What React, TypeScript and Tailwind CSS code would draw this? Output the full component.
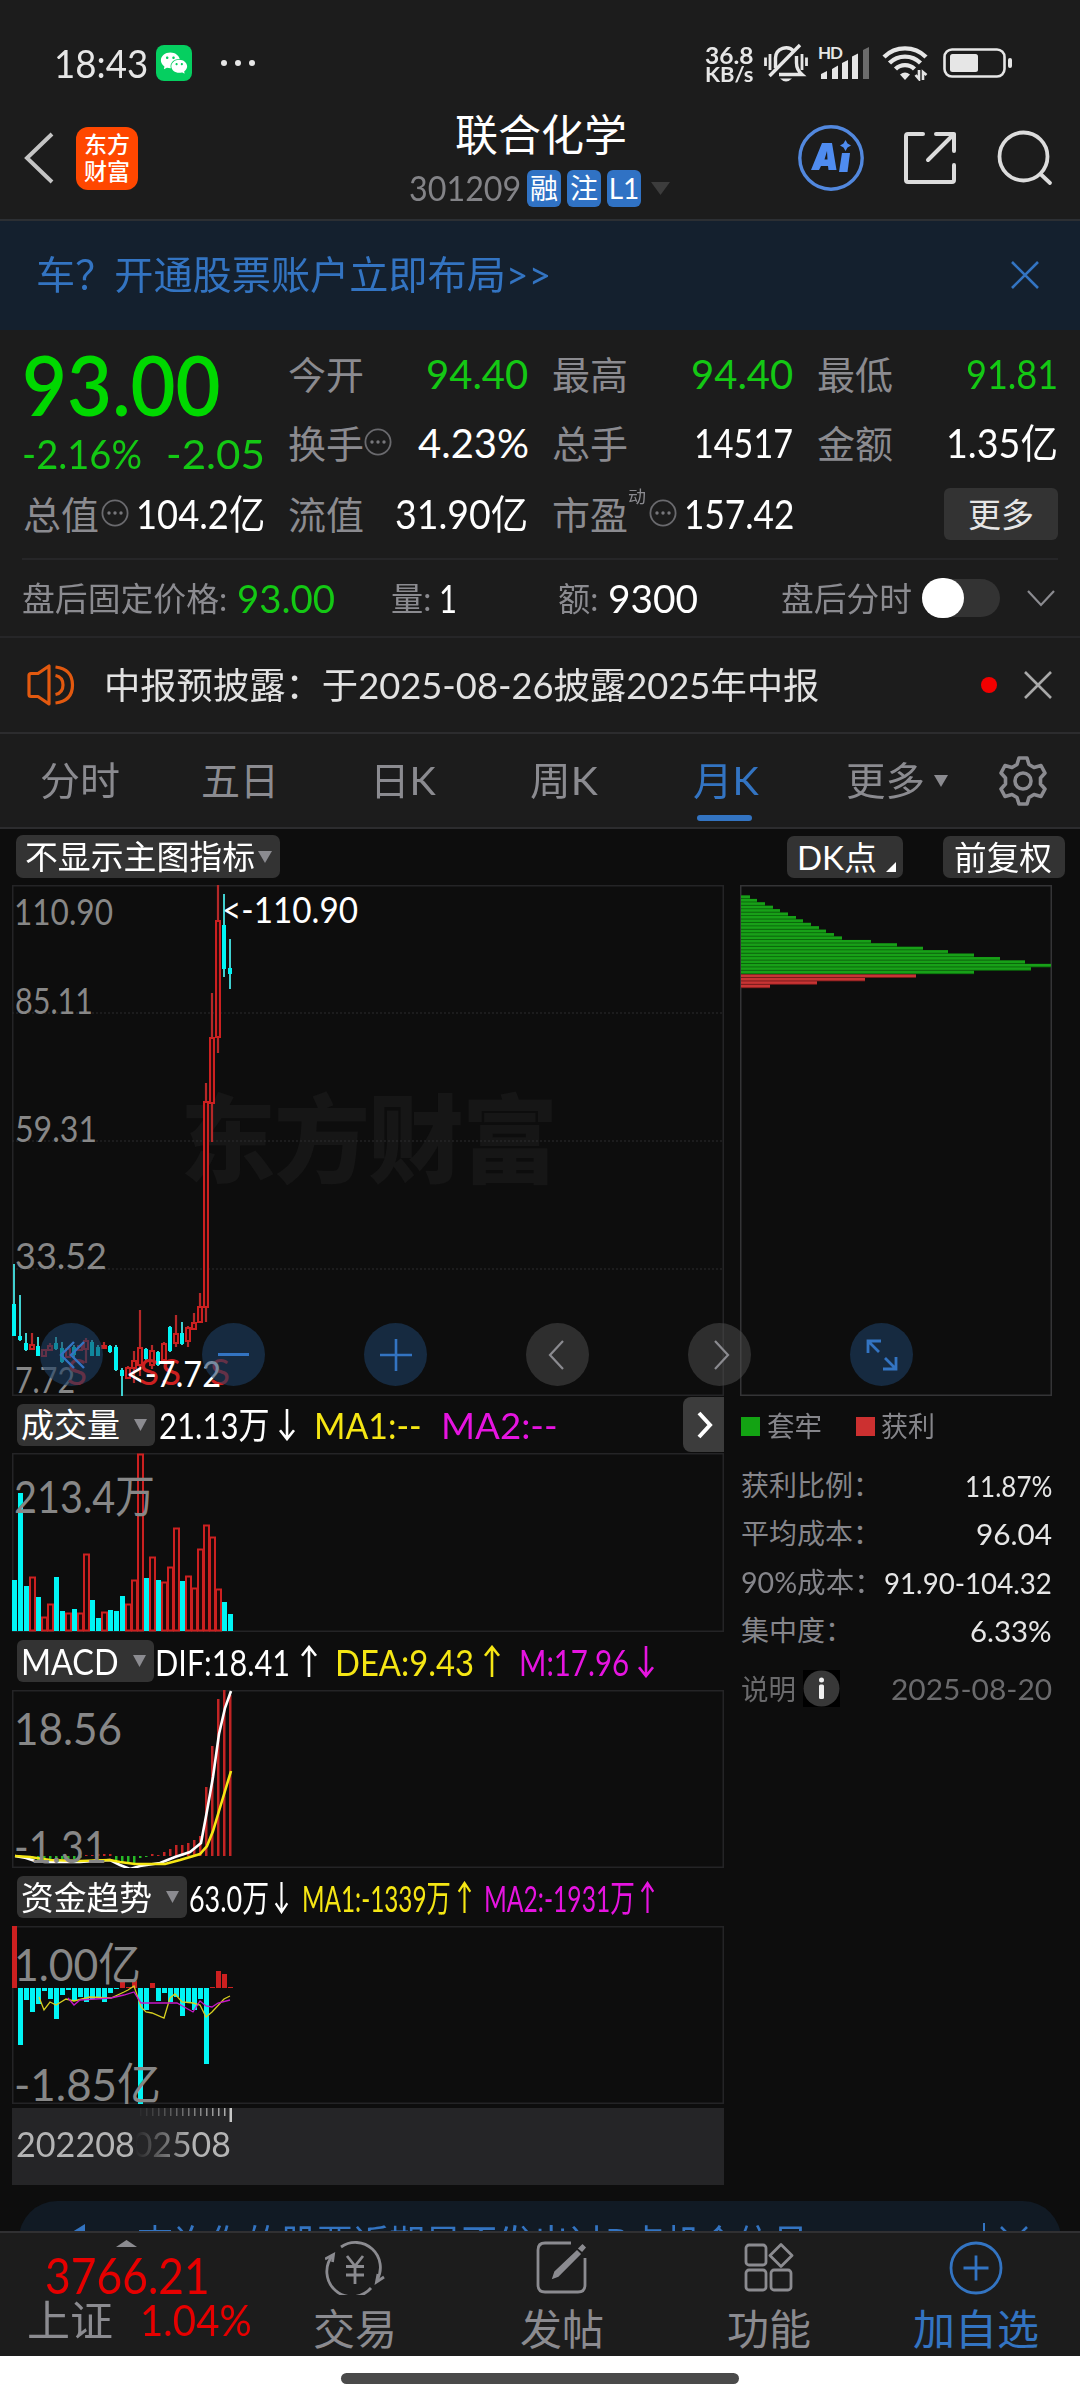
import React, { useLayoutEffect, useRef, useState } from "react";
import clsx from "clsx";
import { AiFillWechat } from "react-icons/ai";

/**
 * Props for Fit component
 */
interface FitProps {
  /** Text size, colour and the width of the box */
  className?: string;
  children: React.ReactNode;
}

/**
 * Fit - single line label squeezed or stretched to the width of its box
 */
const Fit: React.FC<FitProps> = ({ className, children }) => {
  const box = useRef<HTMLSpanElement>(null);
  const text = useRef<HTMLSpanElement>(null);
  const [scale, setScale] = useState(1);

  useLayoutEffect(() => {
    if (box.current && text.current) {
      setScale(box.current.clientWidth / text.current.offsetWidth);
    }
  }, [children]);

  return (
    <span ref={box} className={clsx("block shrink-0 leading-none", className)}>
      <span
        ref={text}
        className="inline-block origin-left whitespace-nowrap"
        style={{ transform: `scaleX(${scale})` }}
      >
        {children}
      </span>
    </span>
  );
};

/* ------------------------------ data ------------------------------ */

type Dir = "u" | "d";

// direction, high, body top, body bottom, low (in chart pixels)
const CANDLES: [Dir, number, number, number, number][] = [
  ["d", 379, 419, 451, 451],
  ["d", 410, 451, 455, 456],
  ["d", 448, 458, 465, 466],
  ["u", 448, 460, 464, 464],
  ["d", 452, 461, 471, 471],
  ["u", 464, 465, 471, 471],
  ["u", 458, 461, 465, 466],
  ["d", 452, 458, 464, 465],
  ["d", 457, 463, 477, 478],
  ["u", 462, 464, 472, 473],
  ["d", 460, 462, 470, 472],
  ["u", 460, 461, 465, 466],
  ["u", 453, 456, 464, 478],
  ["d", 455, 457, 471, 471],
  ["d", 460, 462, 471, 471],
  ["u", 457, 461, 463, 464],
  ["d", 460, 461, 467, 468],
  ["d", 460, 462, 485, 486],
  ["d", 483, 485, 491, 511],
  ["u", 481, 483, 493, 493],
  ["u", 466, 476, 483, 498],
  ["u", 425, 463, 480, 491],
  ["d", 463, 464, 474, 475],
  ["u", 460, 466, 480, 484],
  ["d", 466, 467, 480, 481],
  ["u", 457, 459, 475, 475],
  ["d", 441, 442, 466, 467],
  ["u", 430, 449, 458, 462],
  ["d", 437, 448, 459, 460],
  ["u", 441, 443, 456, 462],
  ["u", 428, 438, 444, 445],
  ["u", 408, 422, 437, 438],
  ["u", 198, 217, 422, 437],
  ["u", 108, 153, 218, 257],
  ["u", 0, 36, 152, 168],
  ["d", 9, 40, 84, 92],
  ["d", 54, 83, 89, 104],
];

const VOLUMES: [Dir, number][] = [
  ["d", 51], ["d", 138], ["d", 45], ["u", 54], ["d", 34], ["u", 14], ["u", 27],
  ["d", 54], ["d", 20], ["u", 18], ["d", 22], ["u", 18], ["u", 77], ["d", 31],
  ["d", 13], ["u", 19], ["d", 21], ["d", 20], ["d", 35], ["u", 27], ["u", 51],
  ["u", 177], ["d", 53], ["u", 74], ["d", 51], ["u", 49], ["u", 64], ["u", 103],
  ["d", 50], ["u", 55], ["u", 43], ["u", 82], ["u", 106], ["u", 94], ["u", 42],
  ["d", 29], ["d", 17],
];

const MACD = [
  0, 0, -1, -3, -5, -5, -5, -4, -3, -3, -3, -2, 1, 1, 2, 2, 2, -4, -7, -7, -7,
  -2, -1, 2, 1, 4, 7, 11, 11, 13, 16, 20, 69, 110, 157, 166, 161,
];

const FUNDS = [
  62, -57, -12, -24, -16, -3, -11, -31, -7, -2, -13, -9, -14, -11, -10, -14,
  -5, -1, 6, 1, 7, -116, -22, 5, -13, -5, -14, -9, -28, -15, -22, -11, -76, 1,
  17, 14, 1,
];

const TRAPPED = [
  9, 16, 24, 32, 39, 47, 55, 62, 70, 78, 85, 93, 101, 130, 156, 182, 207, 233,
  259, 284, 310, 290, 233,
];
const PROFIT = [175, 124, 76, 29];

const RED = "#cc2020";
const CYAN = "#00f5f5";
const STEP = 6;

const barX = (i: number) => i * STEP;

/* ------------------------------ small parts ------------------------------ */

const Triangle: React.FC<{ className?: string }> = ({ className }) => (
  <svg viewBox="0 0 10 10" preserveAspectRatio="none" className={clsx("shrink-0", className)}>
    <path d="M0 0H10L5 10Z" fill="currentColor" />
  </svg>
);

const Arrow: React.FC<{ down?: boolean; className?: string }> = ({ down, className }) => (
  <svg
    viewBox="0 0 18 34"
    preserveAspectRatio="none"
    className={clsx("h-[33px] shrink-0", down && "rotate-180", className)}
  >
    <path d="M9 33V2M2 11L9 2L16 11" fill="none" stroke="currentColor" strokeWidth="2.6" />
  </svg>
);

const InfoDots: React.FC<{ className?: string }> = ({ className }) => (
  <svg viewBox="0 0 28 28" className={clsx("h-[28px] w-[28px] shrink-0", className)}>
    <circle cx="14" cy="14" r="12.6" fill="none" stroke="#6a6a6e" strokeWidth="1.8" />
    <g fill="#77777b">
      <circle cx="8" cy="14" r="1.7" />
      <circle cx="14" cy="14" r="1.7" />
      <circle cx="20" cy="14" r="1.7" />
    </g>
  </svg>
);

const Cross: React.FC<{ className?: string }> = ({ className }) => (
  <svg viewBox="0 0 28 28" className={clsx("h-[28px] w-[28px] shrink-0", className)}>
    <path d="M1 1L27 27M27 1L1 27" fill="none" stroke="currentColor" strokeWidth="2.6" />
  </svg>
);

/* ------------------------------ header ------------------------------ */

const StatusBar = () => (
  <div className="flex h-[110px] shrink-0 items-center pt-[16px] text-[#e6e6e6]">
    <Fit className="ml-[54px] w-[94px] text-[39px]">18:43</Fit>
    <div className="ml-[8px] flex h-[36px] w-[36px] items-center justify-center rounded-[8px] bg-[#05cf60]">
      <AiFillWechat className="h-[30px] w-[30px] text-white" />
    </div>
    <div className="ml-[29px] flex gap-[8px]">
      <i className="h-[6px] w-[6px] rounded-full bg-[#e6e6e6]" />
      <i className="h-[6px] w-[6px] rounded-full bg-[#e6e6e6]" />
      <i className="h-[6px] w-[6px] rounded-full bg-[#e6e6e6]" />
    </div>
    <div className="ml-auto flex flex-col pt-[2px]">
      <Fit className="h-[19px] w-[48px] text-[23px] font-bold">36.8</Fit>
      <Fit className="h-[21px] w-[48px] text-[21px] font-bold">KB/s</Fit>
    </div>
    <svg viewBox="0 0 44 40" className="ml-[11px] h-[40px] w-[44px]" fill="none" stroke="currentColor" strokeWidth="3.4">
      <path d="M11.5 25V15A10.5 10.5 0 0 1 30 8.500M32.500 13V20C32.500 25 34 28 38 31.500H15" />
      <path d="M36 2L5.500 33" />
      <path d="M1.500 14.500V23M6 11V27M42.500 14.500V23M38 11V27" strokeWidth="2.8" />
      <path d="M16 35.500H28Q22 41.500 16 35.500Z" fill="currentColor" stroke="none" />
    </svg>
    <svg viewBox="0 -2 52 36" className="ml-[10px] h-[36px] w-[52px]" fill="currentColor">
      <text x="0" y="12" fontSize="17" textLength="25" className="font-bold">HD</text>
      <path d="M3 27L9 24V32H3ZM14 22L20 18.500V32H14ZM24 16L30 13V32H24ZM34 9.500L40 6.500V32H34Z" />
      <path d="M45 3L51 0V32H45Z" opacity=".4" />
    </svg>
    <svg viewBox="0 0 46 36" className="ml-[12px] h-[36px] w-[46px]" fill="none" stroke="currentColor" strokeWidth="4.4">
      <path d="M2 12A30 30 0 0 1 44 12" />
      <path d="M7.500 18A22 22 0 0 1 38.500 18" />
      <path d="M13.500 24A13.500 13.500 0 0 1 32.500 24" />
      <path d="M18 29.500Q23 25.500 28 29.500L23 35Z" fill="currentColor" stroke="none" />
      <path d="M37 25V34L33.500 30M41 35V27L44.500 30" strokeWidth="2.6" />
    </svg>
    <svg viewBox="0 0 69 30" className="mr-[68px] ml-[15px] h-[30px] w-[69px]">
      <rect x="1.500" y="1.500" width="60" height="27" rx="7.500" fill="none" stroke="currentColor" strokeWidth="2.6" />
      <rect x="7" y="6" width="28" height="18" rx="2.500" fill="currentColor" />
      <rect x="65" y="10" width="4" height="10" rx="2" fill="currentColor" />
    </svg>
  </div>
);

const TitleBar = () => (
  <div className="flex h-[109px] shrink-0 items-center">
    <svg viewBox="0 0 30 52" className="mt-[-14px] ml-[24px] h-[52px] w-[30px]">
      <path d="M28 2L3 26L28 50" fill="none" stroke="#c4c4c4" strokeWidth="4" />
    </svg>
    <div className="ml-[22px] mt-[-13px] flex h-[63px] w-[62px] flex-col items-center justify-center gap-[4px] rounded-[12px] bg-[#ff4700] text-white">
      <Fit className="w-[46px] text-[23px] font-medium">东方</Fit>
      <Fit className="w-[46px] text-[23px] font-medium">财富</Fit>
    </div>
    <div className="ml-[271px] flex w-[262px] flex-col pb-[9px]">
      <Fit className="ml-[46px] w-[172px] text-[43px] text-white">联合化学</Fit>
      <div className="mt-[13px] flex h-[38px] items-center">
        <Fit className="w-[112px] text-[34px] text-[#838387]">301209</Fit>
        {["融", "注", "L1"].map((tag) => (
          <span
            key={tag}
            className="ml-[6px] flex h-[37px] w-[34px] items-center justify-center rounded-[6px] bg-[#3072c4] text-[28px] leading-none text-white"
          >
            {tag}
          </span>
        ))}
        <Triangle className="ml-[10px] h-[13px] w-[19px] text-[#3c3c3c]" />
      </div>
    </div>
    <svg viewBox="0 0 66 66" className="ml-[127px] mt-[-14px] h-[66px] w-[66px] text-[#4f8cf0]">
      <circle cx="33" cy="33" r="31.200" fill="none" stroke="#5288de" strokeWidth="3.400" />
      <path d="M24 18H34L38.500 45H30.500L30 41H23L21 45H13ZM26.500 34.500H29.500L29 26Z" fill="currentColor" fillRule="evenodd" />
      <path d="M44 28H52L49.500 47H41Z" fill="currentColor" />
      <path d="M47.500 15L49.500 18.500L53 20.500L49.500 22.500L47.500 26L45.500 22.500L42 20.500L45.500 18.500Z" fill="currentColor" />
    </svg>
    <svg viewBox="0 0 54 54" className="ml-[39px] mt-[-14px] h-[54px] w-[54px]" fill="none" stroke="#dcdcdc" strokeWidth="4" strokeLinecap="round" strokeLinejoin="round">
      <path d="M20 3H5Q3 3 3 5V49Q3 51 5 51H49Q51 51 51 49V34M33 3H51V20M51 3L25 29" />
    </svg>
    <svg viewBox="0 0 56 56" className="ml-[40px] mt-[-14px] h-[56px] w-[56px]" fill="none" stroke="#dcdcdc" strokeWidth="3.800" strokeLinecap="round">
      <circle cx="26.500" cy="26.500" r="24" />
      <path d="M43.500 44L53 53" />
    </svg>
  </div>
);

const AccountBanner = () => (
  <div className="flex h-[111px] shrink-0 items-center border-t-2 border-[#2c2f33] bg-[#14202e] text-[#3374c2]">
    <Fit className="mt-[-2px] ml-[36px] w-[515px] text-[39px]">车？开通股票账户立即布局&gt;&gt;</Fit>
    <Cross className="mt-[-2px] mr-[41px] ml-auto" />
  </div>
);

/* ------------------------------ quote ------------------------------ */

const Quote = () => (
  <div className="mx-[22px] flex h-[230px] shrink-0 flex-col border-b-2 border-[#262628] text-[#8b8b90]">
    <div className="flex">
      <div className="flex w-[266px] flex-col">
        <Fit className="mt-[13px] w-[199px] text-[82px] font-semibold text-[#00d800]">93.00</Fit>
        <div className="mt-[9px] flex h-[40px] items-center text-[#14c814]">
          <Fit className="w-[120px] text-[40px]">-2.16%</Fit>
          <Fit className="ml-[24px] w-[99px] text-[40px]">-2.05</Fit>
        </div>
      </div>
      <div className="flex flex-col text-white">
        <div className="mt-[21px] flex h-[46px] items-center">
          <Fit className="w-[76px] text-[38px] text-[#8b8b90]">今开</Fit>
          <Fit className="ml-[62px] w-[102px] text-[40px] text-[#14c814]">94.40</Fit>
          <Fit className="ml-[24px] w-[76px] text-[38px] text-[#8b8b90]">最高</Fit>
          <Fit className="ml-[63px] w-[102px] text-[40px] text-[#14c814]">94.40</Fit>
          <Fit className="ml-[24px] w-[76px] text-[38px] text-[#8b8b90]">最低</Fit>
          <Fit className="ml-[73px] w-[92px] text-[40px] text-[#14c814]">91.81</Fit>
        </div>
        <div className="mt-[23px] flex h-[46px] items-center">
          <Fit className="w-[76px] text-[38px] text-[#8b8b90]">换手</Fit>
          <InfoDots className="mt-[-2px]" />
          <Fit className="ml-[26px] w-[111px] text-[40px]">4.23%</Fit>
          <Fit className="ml-[23px] w-[76px] text-[38px] text-[#8b8b90]">总手</Fit>
          <Fit className="ml-[66px] w-[99px] text-[40px]">14517</Fit>
          <Fit className="ml-[24px] w-[76px] text-[38px] text-[#8b8b90]">金额</Fit>
          <Fit className="ml-[53px] w-[112px] text-[40px]">1.35亿</Fit>
        </div>
      </div>
    </div>
    <div className="mt-[17px] flex h-[46px] items-center text-white">
      <Fit className="ml-[1px] w-[76px] text-[38px] text-[#8b8b90]">总值</Fit>
      <InfoDots className="ml-[2px] mt-[-2px]" />
      <Fit className="ml-[7px] w-[129px] text-[40px]">104.2亿</Fit>
      <Fit className="ml-[23px] w-[76px] text-[38px] text-[#8b8b90]">流值</Fit>
      <Fit className="ml-[31px] w-[133px] text-[40px]">31.90亿</Fit>
      <Fit className="ml-[24px] w-[76px] text-[38px] text-[#8b8b90]">市盈</Fit>
      <Fit className="mt-[-36px] w-[18px] text-[17px] text-[#8b8b90]">动</Fit>
      <InfoDots className="ml-[3px] mt-[-2px]" />
      <Fit className="ml-[7px] w-[110px] text-[40px]">157.42</Fit>
      <span className="ml-auto flex h-[52px] w-[114px] items-center justify-center rounded-[6px] bg-[#333333] text-[33px] leading-none text-[#e6e6e6]">
        更多
      </span>
    </div>
  </div>
);

const AfterHours = () => (
  <div className="flex h-[78px] shrink-0 items-center border-b-2 border-[#262628] text-[#8b8b90]">
    <Fit className="ml-[22px] w-[205px] text-[33px]">盘后固定价格:</Fit>
    <Fit className="ml-[10px] w-[98px] text-[38px] text-[#14c814]">93.00</Fit>
    <Fit className="ml-[56px] w-[40px] text-[33px]">量:</Fit>
    <Fit className="ml-[8px] w-[18px] text-[38px] text-white">1</Fit>
    <Fit className="ml-[101px] w-[40px] text-[33px]">额:</Fit>
    <Fit className="ml-[10px] w-[90px] text-[38px] text-white">9300</Fit>
    <Fit className="ml-[83px] w-[131px] text-[33px]">盘后分时</Fit>
    <div className="ml-[10px] flex h-[38px] w-[78px] items-center rounded-full bg-[#333333]">
      <div className="h-[40px] w-[42px] shrink-0 rounded-full bg-white" />
    </div>
    <svg viewBox="0 0 28 17" className="ml-[27px] h-[17px] w-[28px]">
      <path d="M1 1L14 15L27 1" fill="none" stroke="#8b8b90" strokeWidth="2.200" />
    </svg>
  </div>
);

const Notice = () => (
  <div className="flex h-[96px] shrink-0 items-center border-b-2 border-[#2c2c2e] text-[#e2e2e2]">
    <svg viewBox="0 0 48 42" className="ml-[27px] h-[42px] w-[48px]" fill="none" stroke="#e2590f" strokeWidth="3.200">
      <path d="M22 2V40L11 32.500H4Q2 32.500 2 30.500V11.500Q2 9.500 4 9.500H11L22 2Z" strokeLinejoin="round" />
      <path d="M28.500 11.500Q36 13 36 21Q36 29 28.500 30.500M28.500 3Q45.500 5 45.500 21Q45.500 37 28.500 39" />
    </svg>
    <Fit className="ml-[29px] w-[715px] text-[36px]">中报预披露：于2025-08-26披露2025年中报</Fit>
    <i className="ml-[162px] h-[16px] w-[16px] rounded-full bg-[#f20000]" />
    <Cross className="ml-[27px] text-[#a8a8a8]" />
  </div>
);

const Tabs = () => (
  <div className="flex h-[95px] shrink-0 border-b-2 border-[#2c2c2e] text-[39px] text-[#8b8b90]">
    <Fit className="mt-[27px] ml-[40px] w-[80px]">分时</Fit>
    <Fit className="mt-[27px] ml-[81px] w-[78px]">五日</Fit>
    <Fit className="mt-[27px] ml-[91px] w-[66px]">日K</Fit>
    <Fit className="mt-[27px] ml-[94px] w-[68px]">周K</Fit>
    <div className="ml-[95px] flex w-[66px] flex-col text-[#3374c2]">
      <Fit className="mt-[27px] w-[66px]">月K</Fit>
      <i className="mt-[15px] ml-[4px] h-[6px] w-[55px] rounded-full bg-[#3374c2]" />
    </div>
    <Fit className="mt-[27px] ml-[87px] w-[79px]">更多</Fit>
    <Triangle className="mt-[41px] ml-[9px] h-[12px] w-[14px]" />
    <svg viewBox="0 0 48 50" className="mt-[22px] ml-[51px] h-[50px] w-[48px]" fill="none" stroke="currentColor" strokeWidth="3.600" strokeLinejoin="round">
      <path d="M20 2H28L30 8.500L35 11.500L42 9.500L46 17L41.500 22V28L46 33L42 40.500L35 38.500L30 41.500L28 48H20L18 41.500L13 38.500L6 40.500L2 33L6.500 28V22L2 17L6 9.500L13 11.500L18 8.500Z" />
      <circle cx="24" cy="25" r="8" />
    </svg>
  </div>
);

/* ------------------------------ charts ------------------------------ */

const Frame: React.FC<{ h: number }> = ({ h }) => (
  <rect x="0.75" y="0.75" width="710.5" height={h - 1.5} fill="none" stroke="#242426" strokeWidth="1.500" />
);

/** Axis or marker label stretched to a given length */
const Label: React.FC<{ x: number; y: number; len: number; children: string }> = ({ x, y, len, children }) => (
  <text x={x} y={y} textLength={len} lengthAdjust="spacingAndGlyphs">
    {children}
  </text>
);

const CandleChart = () => (
  <svg viewBox="0 0 712 511" className="block h-[511px] w-[712px]">
    <text x="168" y="290" fontSize="96" textLength="378" fill="#161616" className="font-black">
      东方财富
    </text>
    <Frame h={511} />
    <path d="M0 128H712M0 256H712M0 384H712" stroke="#2c2c2e" strokeWidth="1" strokeDasharray="2 2" />
    <g fill="#878787" fontSize="37">
      <Label x={2} y={40} len={99}>110.90</Label>
      <Label x={3} y={129} len={78}>85.11</Label>
      <Label x={3} y={257} len={82}>59.31</Label>
      <Label x={3} y={384} len={92}>33.52</Label>
      <Label x={3} y={508} len={60}>7.72</Label>
    </g>
    {CANDLES.map(([dir, high, top, bottom, low], i) => {
      const x = barX(i);
      return dir === "d" ? (
        <g key={i}>
          <rect x={x + 1} y={high} width="2" height={low - high} fill="#40d0d0" />
          <rect x={x} y={top} width="4" height={bottom - top} fill={CYAN} />
        </g>
      ) : (
        <g key={i}>
          <path d={`M${x + 2} ${high}V${top}M${x + 2} ${bottom}V${low}`} stroke="#b42828" strokeWidth="2.200" />
          <rect x={x} y={top} width="4" height={bottom - top} fill="#2a0a0a" stroke={RED} strokeWidth="2" />
        </g>
      );
    })}
    <g fill="#cc2020" fontSize="37">
      <text x="55" y="500">S</text>
      <text x="127" y="500">S</text>
      <text x="149" y="500">S</text>
      <text x="198" y="500">S</text>
    </g>
    <g fill="#ffffff" fontSize="37">
      <Label x={210} y={38} len={136}>{"<-110.90"}</Label>
      <Label x={114} y={502} len={95}>{"<-7.72"}</Label>
    </g>
  </svg>
);

const VolumeChart = () => (
  <svg viewBox="0 0 712 179" className="block h-[179px] w-[712px]">
    <Frame h={179} />
    {VOLUMES.map(([dir, h], i) =>
      dir === "d" ? (
        <rect key={i} x={barX(i)} y={178 - h} width="5" height={h} fill={CYAN} />
      ) : (
        <rect key={i} x={barX(i)} y={178.5 - h} width="5" height={h - 1} fill="#1c0808" stroke={RED} strokeWidth="2" />
      ),
    )}
    <g fill="#878787" fontSize="45">
      <Label x={2} y={60} len={141}>213.4万</Label>
    </g>
  </svg>
);

const MacdChart = () => (
  <svg viewBox="0 0 712 178" className="block h-[178px] w-[712px]">
    <Frame h={178} />
    {MACD.map((v, i) => (
      <rect
        key={i}
        x={barX(i) + 1}
        y={v > 0 ? 166 - v : 166}
        width="2.500"
        height={Math.abs(v)}
        fill={v > 0 ? "#c22424" : "#26b826"}
      />
    ))}
    <g fill="none" strokeWidth="2.600">
      <path d="M3 166L14 168L23 171L33 172L68 172L98 170L108 175L118 179L128 176L148 173L163 167L178 162L189 153L195 121L201 87L207 44L213 18L219 1" stroke="#ffffff" />
      <path d="M3 166L18 167L38 170L68 171L98 170L108 172L123 174L153 174L168 170L188 164L195 156L201 141L207 121L213 101L219 81" stroke="#f5e614" />
    </g>
    <g fill="#878787" fontSize="45">
      <Label x={2} y={55} len={108}>18.56</Label>
      <Label x={2} y={173} len={93}>-1.31</Label>
    </g>
  </svg>
);

const FundChart = () => (
  <svg viewBox="0 0 712 178" className="block h-[178px] w-[712px]">
    <Frame h={178} />
    {FUNDS.map((v, i) => (
      <rect
        key={i}
        x={barX(i)}
        y={v > 0 ? 62 - v : 62}
        width="5"
        height={Math.abs(v)}
        fill={v > 0 ? RED : CYAN}
      />
    ))}
    <g fill="none" strokeWidth="1.300">
      <path d="M27 71L32 84L38 76L44 79L54 73L62 75L78 71L99 72L112 66L116 64L122 60L129 81L134 86L140 87L152 92L158 72L163 68L170 76L181 77L188 79L194 91L200 86L212 73L218 70" stroke="#d8d020" />
      <path d="M56 72L62 79L68 74L99 72L112 69L122 66L129 77L165 77L181 86L188 75L194 80L200 81L206 77L218 74" stroke="#c818c8" />
    </g>
    <g fill="#878787" fontSize="45">
      <Label x={2} y={55} len={127}>1.00亿</Label>
      <Label x={2} y={175} len={147}>-1.85亿</Label>
    </g>
  </svg>
);

/* ------------------------------ chart headers ------------------------------ */

const IndicatorButton: React.FC<FitProps> = ({ className, children }) => (
  <div className="ml-[5px] flex h-[42px] shrink-0 items-center rounded-[6px] bg-[#333333] pr-[8px] pl-[4px] text-[33px] text-white">
    <Fit className={className}>{children}</Fit>
    <Triangle className="ml-[14px] h-[12px] w-[13px] text-[#8b8b90]" />
  </div>
);

const VolumeHeader = () => (
  <div className="flex h-[57px] items-center text-[37px] text-white">
    <IndicatorButton className="w-[99px]">成交量</IndicatorButton>
    <Fit className="ml-[4px] w-[111px]">21.13万</Fit>
    <Arrow down className="ml-[8px] w-[18px]" />
    <Fit className="ml-[18px] w-[108px] text-[#f5e614]">MA1:--</Fit>
    <Fit className="ml-[19px] w-[117px] text-[#e614e0]">MA2:--</Fit>
    <div className="ml-auto flex h-[55px] w-[41px] items-center justify-center rounded-l-[8px] bg-[#3c3c3c]">
      <svg viewBox="0 0 16 28" className="ml-[3px] h-[28px] w-[16px]">
        <path d="M2 2L13 14L2 26" fill="none" stroke="#ffffff" strokeWidth="4" />
      </svg>
    </div>
  </div>
);

const MacdHeader = () => (
  <div className="flex h-[58px] items-center text-[37px] text-white">
    <IndicatorButton className="w-[98px] text-[36px]">MACD</IndicatorButton>
    <Fit className="ml-[1px] w-[135px]">DIF:18.41</Fit>
    <Arrow className="ml-[10px] w-[18px]" />
    <Fit className="ml-[17px] w-[139px] text-[#f5e614]">DEA:9.43</Fit>
    <Arrow className="ml-[9px] w-[18px] text-[#f5e614]" />
    <Fit className="ml-[18px] w-[110px] text-[#e614e0]">M:17.96</Fit>
    <Arrow down className="ml-[8px] w-[18px] text-[#e614e0]" />
  </div>
);

const FundHeader = () => (
  <div className="flex h-[58px] items-center text-[37px] text-white">
    <IndicatorButton className="w-[131px]">资金趋势</IndicatorButton>
    <Fit className="ml-[2px] w-[80px]">63.0万</Fit>
    <Arrow down className="ml-[5px] w-[15px]" />
    <Fit className="ml-[13px] w-[149px] text-[#f5e614]">MA1:-1339万</Fit>
    <Arrow className="ml-[6px] w-[15px] text-[#f5e614]" />
    <Fit className="ml-[12px] w-[151px] text-[#e614e0]">MA2:-1931万</Fit>
    <Arrow className="ml-[5px] w-[15px] text-[#e614e0]" />
  </div>
);

const DateStrip = () => (
  <div className="mt-[4px] flex h-[77px] flex-col bg-[#252527] text-[35px] text-[#b4b4b4]">
    <svg viewBox="0 0 712 16" className="block h-[16px] w-[712px]">
      {Array.from({ length: 15 }, (_, i) => (
        <rect key={i} x={128 + i * STEP} y="0" width="1.500" height="8" fill="#b4b4b4" opacity={(i + 1) / 16} />
      ))}
      <rect x="217.500" y="0" width="2.500" height="14" fill="#c8c8c8" />
    </svg>
    <div className="flex pt-[2px]">
      <Fit className="ml-[4px] w-[119px]">202208</Fit>
      {/* the older part of the end date fades out under the start date */}
      <div className="flex w-[96px] justify-end overflow-hidden [mask-image:linear-gradient(to_right,transparent,black_60%)]">
        <Fit className="w-[118px]">202508</Fit>
      </div>
    </div>
  </div>
);

/* ------------------------------ cost distribution ------------------------------ */

const CostChart = () => (
  <svg viewBox="0 0 312 511" className="block h-[511px] w-[312px]">
    <rect x="0.75" y="0.75" width="310.5" height="509.5" fill="none" stroke="#343436" strokeWidth="1.500" />
    {TRAPPED.map((w, i) => (
      <g key={i}>
        <rect x="1" y={10.5 + i * 3.42} width={w} height="3.42" fill="#0c6c0c" />
        <rect x="1" y={10.5 + i * 3.42} width={w} height="2.5" fill="#18a018" />
      </g>
    ))}
    {PROFIT.map((w, i) => (
      <g key={i}>
        <rect x="1" y={89.5 + i * 3.42} width={w} height="3.42" fill="#7c1c1c" />
        <rect x="1" y={89.5 + i * 3.42} width={w} height="2.5" fill="#c83434" />
      </g>
    ))}
  </svg>
);

const CostPanel = () => (
  <div className="ml-[16px] flex w-[312px] flex-col text-[28px] text-[#85858a]">
    <CostChart />
    <div className="mt-[13px] flex h-[34px] items-center">
      <i className="ml-[1px] h-[19px] w-[19px] bg-[#13a313]" />
      <Fit className="ml-[7px] w-[55px]">套牢</Fit>
      <i className="ml-[34px] h-[19px] w-[19px] bg-[#cc3030]" />
      <Fit className="ml-[6px] w-[54px]">获利</Fit>
    </div>
    <div className="mt-[25px] flex h-[34px] items-center justify-between">
      <Fit className="ml-[1px] w-[140px]">获利比例：</Fit>
      <Fit className="w-[87px] text-[29px] text-[#e6e6e6]">11.87%</Fit>
    </div>
    <div className="mt-[14px] flex h-[34px] items-center justify-between">
      <Fit className="ml-[1px] w-[140px]">平均成本：</Fit>
      <Fit className="w-[76px] text-[29px] text-[#e6e6e6]">96.04</Fit>
    </div>
    <div className="mt-[15px] flex h-[34px] items-center justify-between">
      <Fit className="ml-[1px] w-[142px]">90%成本：</Fit>
      <Fit className="w-[168px] text-[29px] text-[#e6e6e6]">91.90-104.32</Fit>
    </div>
    <div className="mt-[14px] flex h-[34px] items-center justify-between">
      <Fit className="ml-[1px] w-[112px]">集中度：</Fit>
      <Fit className="w-[82px] text-[29px] text-[#e6e6e6]">6.33%</Fit>
    </div>
    <div className="mt-[23px] flex h-[37px] items-center text-[#6a6a6c]">
      <Fit className="ml-[1px] w-[55px]">说明</Fit>
      <div className="ml-[7px] h-[37px] w-[37px] bg-black">
        <svg viewBox="0 0 37 37" className="block h-[37px] w-[37px]">
          <circle cx="18.500" cy="18.500" r="18" fill="#383838" />
          <circle cx="18.500" cy="10" r="2.500" fill="#f0f0f0" />
          <rect x="16" y="14.500" width="5" height="14.500" rx="1.500" fill="#f0f0f0" />
        </svg>
      </div>
      <Fit className="ml-auto w-[161px] text-[29px]">2025-08-20</Fit>
    </div>
  </div>
);

const ROUND = "flex h-[63px] w-[63px] items-center justify-center rounded-full";
const BLUE = "bg-[#1c3d63]/60 text-[#3374c2]";
const GRAY = "bg-[#505050]/50 text-[#8b8b90]";

const ChartControls = () => (
  <div className="absolute top-[438px] left-[40px] flex gap-[99px]">
    <div className={clsx(ROUND, BLUE)}>
      <svg viewBox="0 0 30 30" className="h-[30px] w-[30px]" fill="none" stroke="currentColor" strokeWidth="2.400">
        <path d="M17 2L4 15L17 28M27 2L14 15L27 28" />
      </svg>
    </div>
    <div className={clsx(ROUND, BLUE)}>
      <i className="h-[3px] w-[31px] bg-[#3374c2]" />
    </div>
    <div className={clsx(ROUND, BLUE)}>
      <svg viewBox="0 0 32 32" className="h-[32px] w-[32px]" fill="none" stroke="currentColor" strokeWidth="2.600">
        <path d="M16 0V32M0 16H32" />
      </svg>
    </div>
    <div className={clsx(ROUND, GRAY)}>
      <svg viewBox="0 0 18 30" className="mr-[4px] h-[30px] w-[18px]" fill="none" stroke="currentColor" strokeWidth="2.200">
        <path d="M16 1L3 15L16 29" />
      </svg>
    </div>
    <div className={clsx(ROUND, GRAY)}>
      <svg viewBox="0 0 18 30" className="ml-[4px] h-[30px] w-[18px]" fill="none" stroke="currentColor" strokeWidth="2.200">
        <path d="M2 1L15 15L2 29" />
      </svg>
    </div>
    <div className={clsx(ROUND, BLUE)}>
      <svg viewBox="0 0 32 32" className="h-[32px] w-[32px]" fill="none" stroke="currentColor" strokeWidth="2.800">
        <path d="M2 14V2H15M2 2L13 13M30 18V30H17M30 30L19 19" />
      </svg>
    </div>
  </div>
);

const Charts = () => (
  <div className="flex shrink-0 flex-col">
    <div className="flex h-[56px] pt-[6px] text-[33px] text-white">
      <div className="ml-[16px] flex h-[43px] w-[264px] items-center rounded-[7px] bg-[#333333] pl-[9px]">
        <Fit className="w-[230px]">不显示主图指标</Fit>
        <Triangle className="ml-[3px] h-[12px] w-[14px] text-[#8b8b90]" />
      </div>
      <div className="mt-[1px] ml-auto flex h-[42px] w-[116px] items-center rounded-[7px] bg-[#333333] pl-[10px]">
        <Fit className="w-[80px]">DK点</Fit>
        <svg viewBox="0 0 10 10" className="mt-[19px] ml-[9px] h-[10px] w-[10px]">
          <path d="M10 0V10H0Z" fill="#ffffff" />
        </svg>
      </div>
      <div className="mt-[1px] mr-[15px] ml-[40px] flex h-[42px] w-[122px] items-center rounded-[7px] bg-[#333333] pl-[11px]">
        <Fit className="w-[98px]">前复权</Fit>
      </div>
    </div>
    <div className="relative flex h-[1316px]">
      <div className="ml-[12px] flex w-[712px] flex-col">
        <CandleChart />
        <VolumeHeader />
        <VolumeChart />
        <MacdHeader />
        <MacdChart />
        <FundHeader />
        <FundChart />
        <DateStrip />
      </div>
      <CostPanel />
      <ChartControls />
    </div>
  </div>
);

/* ------------------------------ bottom ------------------------------ */

const SignalBanner = () => (
  <div className="flex h-[30px] shrink-0 overflow-hidden px-[19px]">
    <div className="flex h-[90px] w-full rounded-[38px] bg-[#111a24] pt-[22px] text-[#3374c2]">
      <svg viewBox="0 0 36 36" className="ml-[40px] h-[36px] w-[36px]">
        <path d="M26 1V35L10 25H2V11H10Z" fill="currentColor" />
      </svg>
      <Fit className="ml-[42px] w-[672px] text-[38px]">查询你的股票近期是否发出过B点机会信号</Fit>
      <i className="ml-[174px] h-[38px] w-[2px] bg-[#3374c2]" />
      <Cross className="mt-[3px] ml-[15px]" />
    </div>
  </div>
);

const NavItem: React.FC<{ icon: React.ReactNode; label: string; className?: string }> = ({
  icon,
  label,
  className,
}) => (
  <div className={clsx("flex flex-col items-center pt-[6px]", className)}>
    <div className="flex h-[58px] items-center">{icon}</div>
    <span className="mt-[11px] text-[42px] leading-none whitespace-nowrap">{label}</span>
  </div>
);

const BottomBar = () => (
  <div className="flex h-[125px] shrink-0 border-t-2 border-[#303032] bg-[#1c1c1c] text-[#8b8b90]">
    <div className="flex w-[271px] flex-col">
      <Triangle className="mt-[7px] ml-[116px] h-[7px] w-[21px] rotate-180" />
      <Fit className="mt-[3px] ml-[45px] w-[165px] text-[50px] text-[#e60000]">3766.21</Fit>
      <div className="mt-[-3px] flex h-[46px] items-center">
        <Fit className="ml-[27px] w-[86px] text-[42px]">上证</Fit>
        <Fit className="ml-[27px] w-[112px] text-[42px] text-[#e60000]">1.04%</Fit>
      </div>
    </div>
    <NavItem
      className="w-[168px]"
      label="交易"
      icon={
        <svg viewBox="0 0 60 54" className="h-[54px] w-[60px]" fill="none" stroke="currentColor" strokeWidth="2.800">
          <path d="M16 6A25 25 0 0 1 52 39" />
          <path d="M59 36L51.500 41L53 33" />
          <path d="M46 47A25 25 0 0 1 8 14" />
          <path d="M0 18L8.500 13.500L7.500 21" />
          <path d="M22 15L30 25L38 15M30 25V43M21 25.500H39M21 34H39" />
        </svg>
      }
    />
    <NavItem
      className="ml-[39px] w-[168px]"
      label="发帖"
      icon={
        <svg viewBox="0 0 52 54" className="h-[54px] w-[52px]" fill="none" stroke="currentColor" strokeWidth="2.800">
          <path d="M35 2H9Q2 2 2 9V44Q2 51 9 51H42Q49 51 49 44V17" />
          <path d="M41 10L44 13L22 35L17 37L19 31ZM43 7.500L46.500 4L49 6.500L46 10Z" fill="currentColor" strokeWidth="1.500" />
        </svg>
      }
    />
    <NavItem
      className="ml-[39px] w-[168px]"
      label="功能"
      icon={
        <svg viewBox="0 0 50 50" className="h-[50px] w-[50px]" fill="none" stroke="currentColor" strokeWidth="2.800">
          <rect x="2" y="2" width="20" height="20" rx="3" />
          <rect x="2" y="27" width="20" height="20" rx="3" />
          <rect x="27" y="27" width="20" height="20" rx="3" />
          <path d="M37 1.500L48 12.500L37 23.500L26 12.500Z" strokeLinejoin="round" />
        </svg>
      }
    />
    <NavItem
      className="ml-[33px] w-[180px] text-[#3374c2]"
      label="加自选"
      icon={
        <svg viewBox="0 0 54 54" className="h-[54px] w-[54px]" fill="none" stroke="currentColor" strokeWidth="2.800">
          <circle cx="27" cy="27" r="25" />
          <path d="M27 14.500V39.500M14.500 27H39.500" />
        </svg>
      }
    />
  </div>
);

const App: React.FC = () => (
  <div
    lang="zh-CN"
    className="flex h-[2400px] w-[1080px] flex-col overflow-hidden bg-[#0d0d0d] font-[Lato,'Noto_Sans_CJK_SC',sans-serif]"
  >
    <div className="flex shrink-0 flex-col bg-[#1c1c1c]">
      <StatusBar />
      <TitleBar />
      <AccountBanner />
      <Quote />
      <AfterHours />
      <Notice />
      <Tabs />
    </div>
    <Charts />
    <SignalBanner />
    <BottomBar />
    <div className="flex h-[44px] shrink-0 justify-center bg-white pt-[17px]">
      <i className="h-[11px] w-[398px] rounded-full bg-[#4a4a4a]" />
    </div>
  </div>
);

export default App;
